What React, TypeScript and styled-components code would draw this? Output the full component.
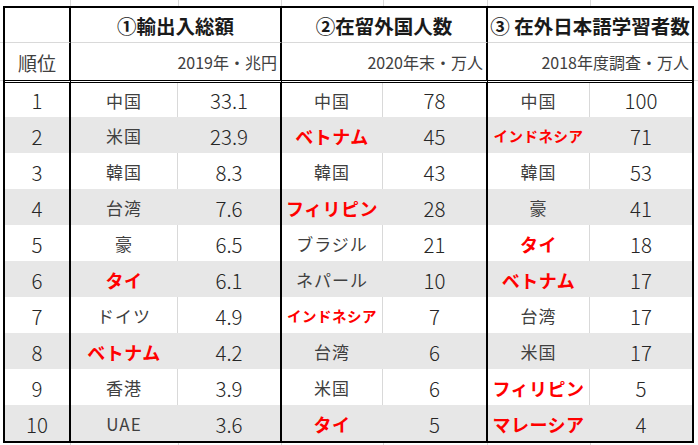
import React from 'react';
import styled, { createGlobalStyle } from 'styled-components';

type Row = [number, string, string, string, string, string, string];

const ROWS: Row[] = [
  [1, '中国', '33.1', '中国', '78', '中国', '100'],
  [2, '米国', '23.9', 'ベトナム', '45', 'インドネシア', '71'],
  [3, '韓国', '8.3', '韓国', '43', '韓国', '53'],
  [4, '台湾', '7.6', 'フィリピン', '28', '豪', '41'],
  [5, '豪', '6.5', 'ブラジル', '21', 'タイ', '18'],
  [6, 'タイ', '6.1', 'ネパール', '10', 'ベトナム', '17'],
  [7, 'ドイツ', '4.9', 'インドネシア', '7', '台湾', '17'],
  [8, 'ベトナム', '4.2', '台湾', '6', '米国', '17'],
  [9, '香港', '3.9', '米国', '6', 'フィリピン', '5'],
  [10, 'UAE', '3.6', 'タイ', '5', 'マレーシア', '4']
];

// ASEAN members are highlighted in red
const ASEAN = new Set(['ベトナム', 'インドネシア', 'フィリピン', 'タイ', 'マレーシア']);

const GRID = '#d9d9d9';
const SHADE = '#e7e7e7';

type Edge = 'thick' | 'thin' | 'none';

export default function App (): React.ReactElement {
  return (
    <>
      <GlobalStyle />
      <Sheet>
        <Table>
          {/* header row 1 */}
          <HeadCell $edge='thick' />
          <TitleCell $edge='thick'>①輸出入総額</TitleCell>
          <TitleCell $edge='thick'>②在留外国人数</TitleCell>
          <TitleCell $edge='none'>③ 在外日本語学習者数</TitleCell>
          {/* header row 2 */}
          <LabelCell $edge='thick'>順位</LabelCell>
          <UnitCell $edge='thick'>2019年・兆円</UnitCell>
          <UnitCell $edge='thick'>2020年末・万人</UnitCell>
          <UnitCell $edge='none'>2018年度調査・万人</UnitCell>
          {/* data */}
          {ROWS.map((row, i) => {
            const shaded = i % 2 === 1;
            const first = i === 0;
            return (
              <React.Fragment key={row[0]}>
                <NumCell $edge='thick' $shaded={shaded} $first={first}>{row[0]}</NumCell>
                <Name value={row[1]} edge='thin' shaded={shaded} first={first} />
                <NumCell $edge='thick' $shaded={shaded} $first={first}>{row[2]}</NumCell>
                <Name value={row[3]} edge='thin' shaded={shaded} first={first} />
                <NumCell $edge='thick' $shaded={shaded} $first={first}>{row[4]}</NumCell>
                <Name value={row[5]} edge='thin' shaded={shaded} first={first} />
                <NumCell $edge='none' $shaded={shaded} $first={first}>{row[6]}</NumCell>
              </React.Fragment>
            );
          })}
        </Table>
      </Sheet>
    </>
  );
}

function Name ({ value, edge, shaded, first }: { value: string, edge: Edge, shaded: boolean, first: boolean }): React.ReactElement {
  const red = ASEAN.has(value);
  return (
    <NameCell $edge={edge} $shaded={shaded} $first={first} $red={red} $small={value.length > 5}>
      {value}
    </NameCell>
  );
}

const GlobalStyle = createGlobalStyle`
  html, body {
    margin: 0;
    padding: 0;
    background: #fff;
  }
  body {
    font-family: "Noto Sans CJK JP", "Noto Sans", sans-serif;
    color: #333;
  }
`;

const Sheet = styled.div`
  width: 698px;
  height: 445px;
  overflow: hidden;
  padding: 6px 0 0 3px;
  box-sizing: border-box;
  background-image:
    linear-gradient(${GRID}, ${GRID}),
    linear-gradient(${GRID}, ${GRID}),
    linear-gradient(${GRID}, ${GRID}),
    linear-gradient(${GRID}, ${GRID}),
    linear-gradient(${GRID}, ${GRID}),
    linear-gradient(${GRID}, ${GRID}),
    linear-gradient(${GRID}, ${GRID}),
    linear-gradient(${GRID}, ${GRID});
  background-repeat: no-repeat;
  background-size: 1px 100%, 1px 100%, 1px 100%, 1px 100%, 1px 100%, 1px 100%, 100% 1px, 100% 1px;
  background-position: 70px 0, 178px 0, 281px 0, 383px 0, 487px 0, 590px 0, 0 42px, 0 80px;
`;

const Table = styled.div`
  display: grid;
  grid-template-columns: 66px 107px 104px 101px 105px 102px 102px;
  grid-template-rows: 35px 40px 34px repeat(9, 36px);
  width: max-content;
  border: 2px solid #000;
  background: #fff;
`;

const Cell = styled.div<{ $edge: Edge, $shaded?: boolean }>`
  display: flex;
  align-items: center;
  justify-content: center;
  box-sizing: border-box;
  min-width: 0;
  white-space: nowrap;
  background: ${p => p.$shaded ? SHADE : '#fff'};
  border-right: ${p => p.$edge === 'thick'
    ? '2px solid #000'
    : p.$edge === 'thin'
      ? `1px solid ${p.$shaded ? SHADE : GRID}`
      : 'none'};
`;

const HeadCell = styled(Cell)`
  border-bottom: 1px solid ${GRID};
`;

const TitleCell = styled(HeadCell)`
  grid-column: span 2;
  font-size: 19.5px;
  font-weight: 700;
  color: #1a1a1a;
  padding-top: 1px;
`;

const LabelCell = styled(Cell)`
  border-bottom: 3px double #000;
  font-size: 19px;
  color: #404040;
  padding-top: 1px;
`;

const UnitCell = styled(LabelCell)`
  grid-column: span 2;
  justify-content: flex-end;
  padding-right: 3px;
  font-size: 16px;
`;

const NumCell = styled(Cell)<{ $first: boolean }>`
  font-size: 20.5px;
  font-weight: 300;
  color: #262626;
  padding-top: ${p => p.$first ? '0' : '1px'};
`;

const NameCell = styled(Cell)<{ $first: boolean, $red: boolean, $small: boolean }>`
  font-size: ${p => p.$small ? '14.5px' : p.$red ? '18px' : '17px'};
  font-weight: ${p => p.$red ? 700 : 400};
  color: ${p => p.$red ? '#ff0000' : '#404040'};
  letter-spacing: ${p => p.$red ? '0.5px' : '1px'};
  padding-top: ${p => p.$first ? '0' : '1px'};
`;
